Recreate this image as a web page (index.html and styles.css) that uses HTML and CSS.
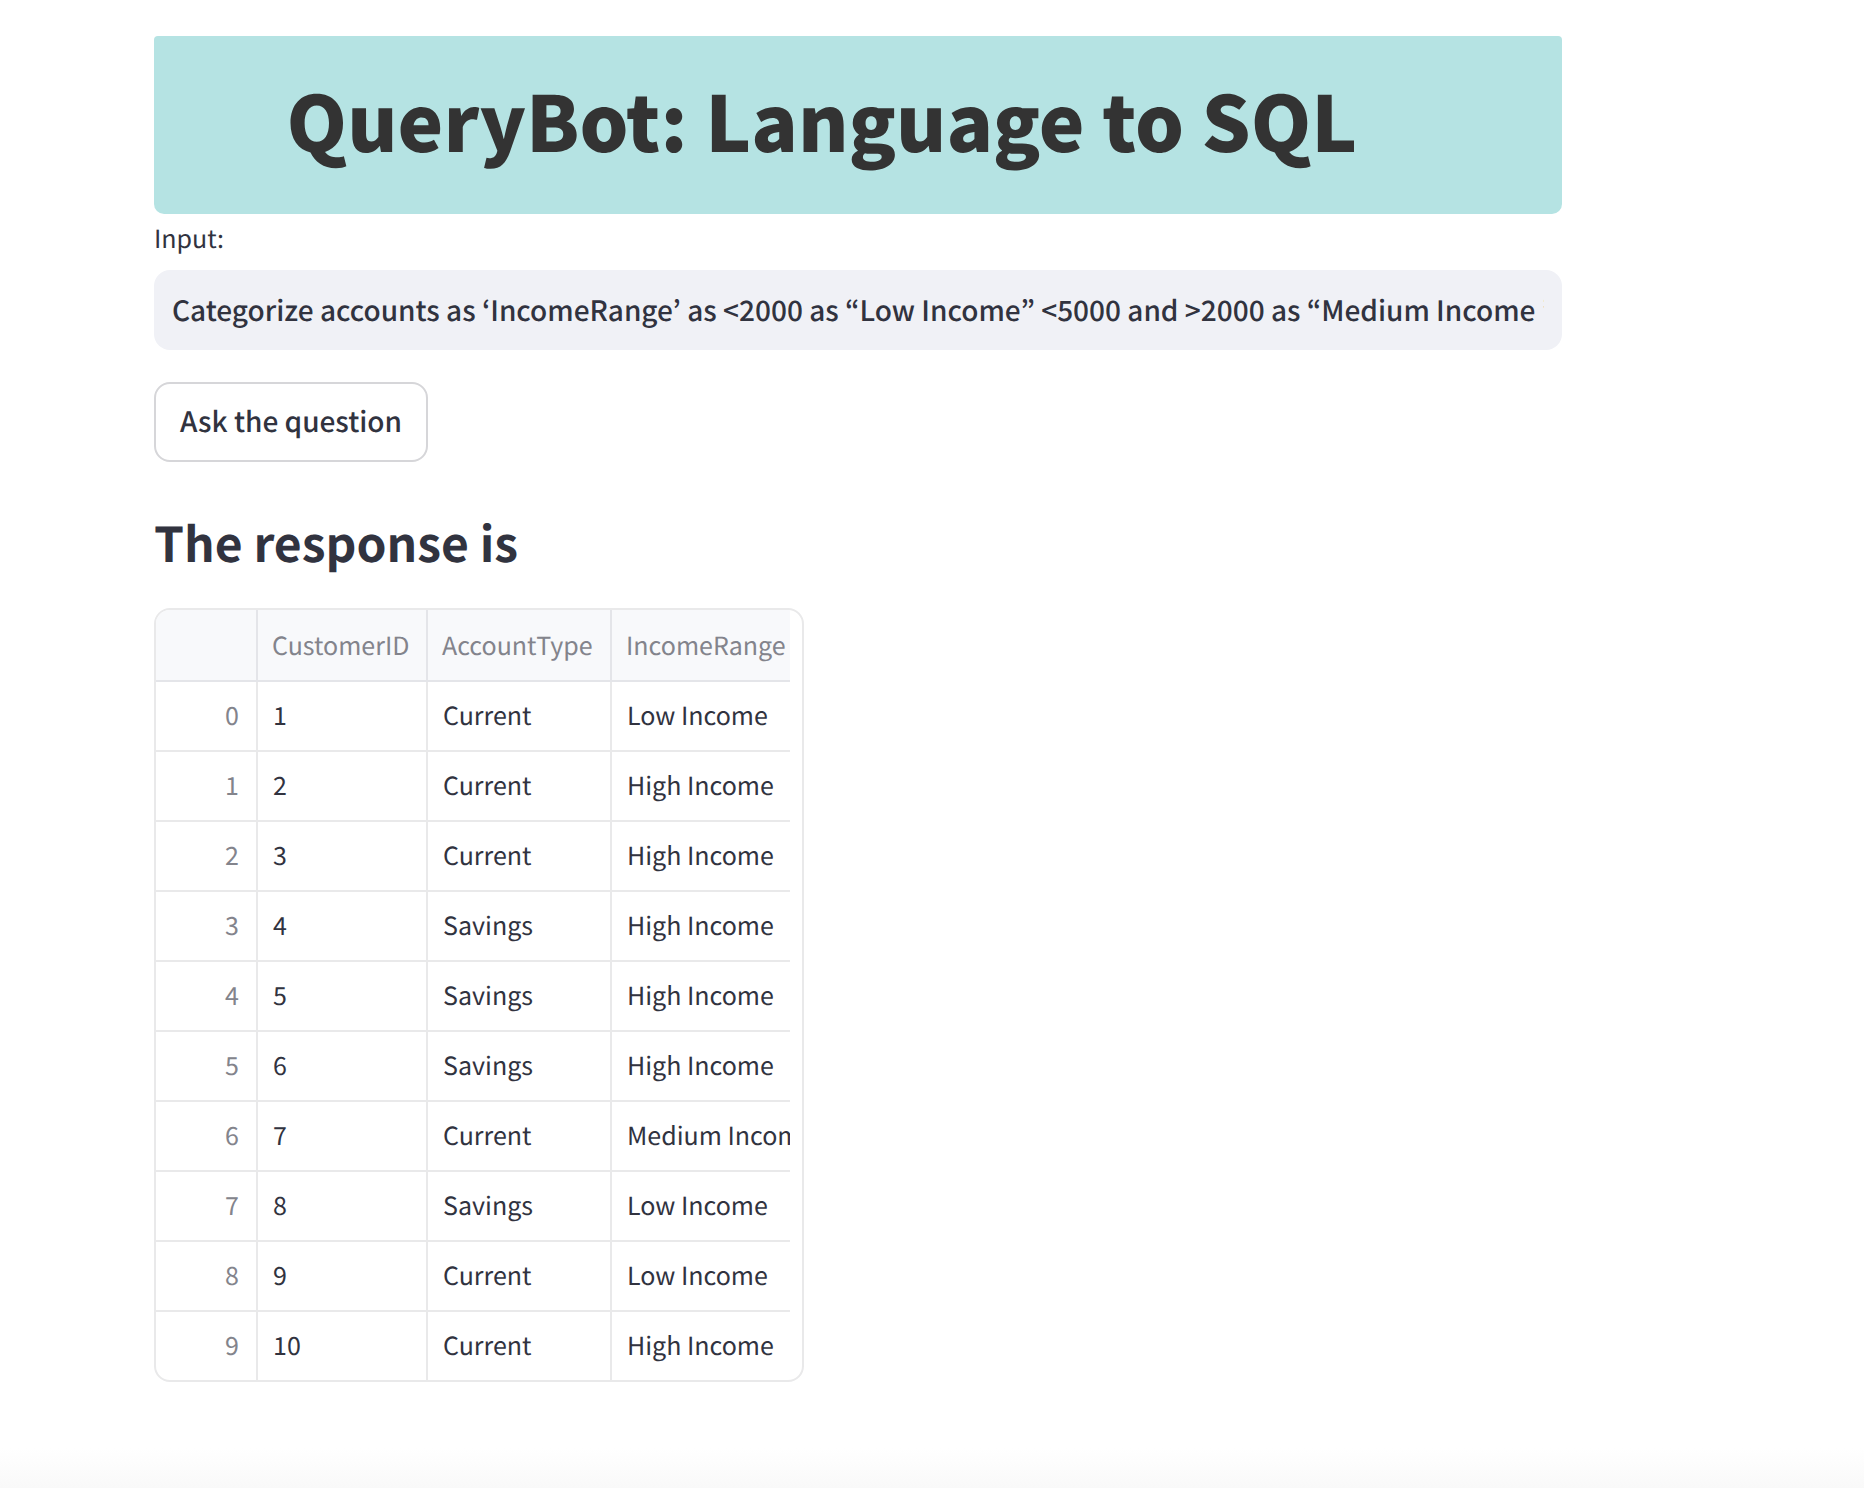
FILE: index.html
```html
<!DOCTYPE html>
<html lang="en">
<head>
<meta charset="utf-8">
<meta name="viewport" content="width=device-width, initial-scale=1">
<title>QueryBot</title>
<link rel="stylesheet" href="styles.css">
</head>
<body>
<main class="page">
  <header class="banner">
    <h1 class="banner-title">QueryBot: Language to SQL</h1>
  </header>
  <form class="ask">
    <label class="ask-label" for="question">Input:</label>
    <input class="ask-input" id="question" type="text" value="Categorize accounts as ‘IncomeRange’ as &lt;2000 as “Low Income” &lt;5000 and &gt;2000 as “Medium Income ” and &gt;5000 as “High Income”">
    <button class="ask-button" type="button">Ask the question</button>
  </form>
  <section class="response">
    <h2 class="response-title">The response is</h2>
    <div class="frame">
      <table class="grid">
        <colgroup><col class="col-index"><col class="col-id"><col class="col-type"><col class="col-range"></colgroup>
        <thead>
          <tr><td></td><th scope="col">CustomerID</th><th scope="col">AccountType</th><th scope="col">IncomeRange</th></tr>
        </thead>
        <tbody>
          <tr><th scope="row">0</th><td>1</td><td>Current</td><td>Low Income</td></tr>
          <tr><th scope="row">1</th><td>2</td><td>Current</td><td>High Income</td></tr>
          <tr><th scope="row">2</th><td>3</td><td>Current</td><td>High Income</td></tr>
          <tr><th scope="row">3</th><td>4</td><td>Savings</td><td>High Income</td></tr>
          <tr><th scope="row">4</th><td>5</td><td>Savings</td><td>High Income</td></tr>
          <tr><th scope="row">5</th><td>6</td><td>Savings</td><td>High Income</td></tr>
          <tr><th scope="row">6</th><td>7</td><td>Current</td><td>Medium Income</td></tr>
          <tr><th scope="row">7</th><td>8</td><td>Savings</td><td>Low Income</td></tr>
          <tr><th scope="row">8</th><td>9</td><td>Current</td><td>Low Income</td></tr>
          <tr><th scope="row">9</th><td>10</td><td>Current</td><td>High Income</td></tr>
        </tbody>
      </table>
    </div>
  </section>
</main>
</body>
</html>
```
FILE: styles.css
```css
* { box-sizing: border-box; }

body {
  margin: 0;
  min-height: 100vh;
  background: #fff linear-gradient(to top, #f9f9f9, #fff) no-repeat bottom / 100% 40px;
  color: #31333f;
  font-family: "Source Sans Pro", "Noto Sans CJK KR", sans-serif;
  text-rendering: geometricPrecision;
}

.page { padding: 36px 302px 64px 154px; }

.banner {
  padding: 28px 72px 38px 0;
  border-radius: 4px 4px 10px 10px;
  background: #b5e3e3;
}

.banner-title {
  margin: 0;
  color: #333;
  font-size: 77px;
  font-weight: 900;
  line-height: 112px;
  text-align: center;
}

.ask {
  display: flex;
  flex-direction: column;
  align-items: flex-start;
}

.ask-label {
  margin: 4px 0 12px;
  font-size: 25px;
  line-height: 40px;
}

.ask-input {
  width: 100%;
  height: 80px;
  padding: 0 18px;
  border: 0;
  border-radius: 16px;
  background: #f0f1f6;
  color: inherit;
  font: inherit;
  font-size: 28px;
  font-weight: 500;
  text-rendering: inherit;
}

.ask-button {
  height: 80px;
  margin-top: 32px;
  padding: 0 24px 2px;
  border: 2px solid #d6d6d9;
  border-radius: 16px;
  background: #fff;
  color: inherit;
  font: inherit;
  font-size: 28px;
  font-weight: 500;
  text-rendering: inherit;
}

.response-title {
  margin: 46px 0 34px;
  font-size: 48px;
  font-weight: 700;
  line-height: 66px;
}

.frame {
  width: 650px;
  max-width: 100%;
  overflow: hidden;
  border: 2px solid #e9e9ea;
  border-radius: 16px;
}

.grid {
  width: 634px;
  table-layout: fixed;
  border-collapse: separate;
  border-spacing: 0;
  font-size: 25px;
  line-height: 34px;
}

.col-index { width: 102px; }
.col-id { width: 170px; }
.col-type { width: 184px; }

.grid th,
.grid td {
  height: 70px;
  padding: 0 0 2px 15px;
  overflow: hidden;
  border-right: 2px solid #e9e9ea;
  border-bottom: 2px solid #e9e9ea;
  font-weight: 400;
  text-align: left;
  white-space: nowrap;
}

.grid tr > :last-child { border-right: 0; }
.grid tbody tr:last-child > * { height: 68px; border-bottom: 0; }

.grid thead th,
.grid thead td {
  height: 72px;
  padding: 0 0 0 14px;
  border-color: #e4e5e9;
  background: #f8f9fb;
  color: #83848c;
}

.grid tbody th {
  padding: 0 17px 2px 0;
  color: #83848c;
  text-align: right;
}
```
